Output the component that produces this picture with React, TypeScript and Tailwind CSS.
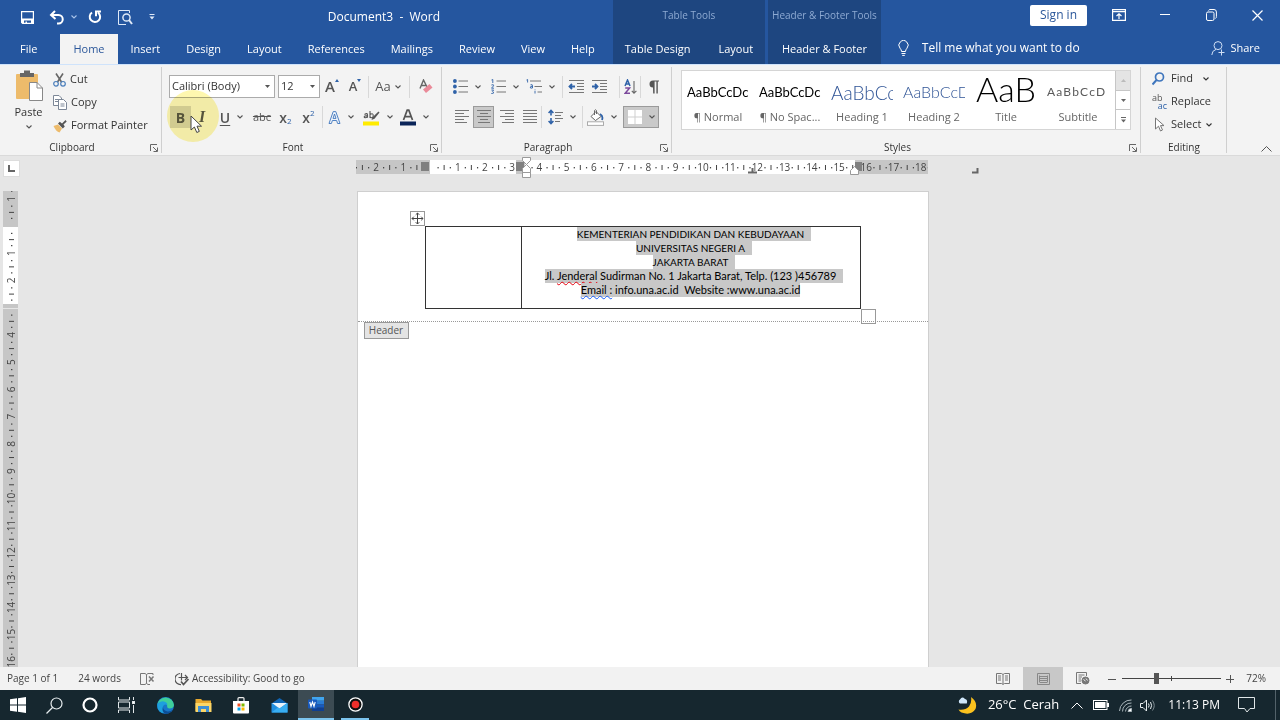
import { useState } from 'react';
import type { ReactNode } from 'react';

const tabs = ['Insert', 'Design', 'Layout', 'References', 'Mailings', 'Review', 'View', 'Help'];

const styleCards = [
    { name: '¶ Normal', sample: 'AaBbCcDc', cls: 'text-[13px] text-black' },
    { name: '¶ No Spac...', sample: 'AaBbCcDc', cls: 'text-[13px] text-black' },
    { name: 'Heading 1', sample: 'AaBbCc', cls: 'text-[19px] font-light text-[#2f5496]' },
    { name: 'Heading 2', sample: 'AaBbCcD', cls: 'text-[16px] font-light text-[#2f5496]' },
    { name: 'Title', sample: 'AaB', cls: 'text-[34px] font-light text-black' },
    { name: 'Subtitle', sample: 'AaBbCcD', cls: 'text-[12px] tracking-widest text-[#5a5a5a]' },
];

function Chevron({ className = '' }: { className?: string }) {
    return (
        <svg width="6" height="4" viewBox="0 0 6 4" fill="none" stroke="currentColor" strokeWidth="1.1" className={`shrink-0 ${className}`}>
            <path d="M0.5 0.5 3 3 5.5 0.5" />
        </svg>
    );
}

function Launcher({ label }: { label: string }) {
    return (
        <button aria-label={label} className="absolute right-1 bottom-[3px]">
            <svg width="8" height="8" viewBox="0 0 8 8" fill="none" stroke="#666" strokeWidth="1">
                <path d="M0.5 7V0.5H7M3 3l4 4M7.5 3.5v4h-4" />
            </svg>
        </button>
    );
}

function Group({ name, launcher = true, className = '', children }: { name: string; launcher?: boolean; className?: string; children: ReactNode }) {
    return (
        <section aria-label={name} className={`relative flex shrink-0 flex-col justify-between pt-[5px] pb-px ${className}`}>
            {children}
            <div className={`text-center text-[10px] leading-[14px] ${launcher ? 'pr-[18px]' : ''}`}>{name}</div>
            {launcher && <Launcher label={`${name} settings`} />}
            <div className="absolute top-[2px] right-0 bottom-[2px] w-px bg-[#cfcfcf]" />
        </section>
    );
}

function Tool({ label, className = '', children, menu = false }: { label: string; className?: string; children: ReactNode; menu?: boolean }) {
    return (
        <button aria-label={label} className={`flex h-[22px] shrink-0 items-center justify-center ${className}`}>
            {children}
            {menu && <Chevron className="ml-[7px] text-[#555]" />}
        </button>
    );
}

function Divider({ className = '' }: { className?: string }) {
    return <div className={`h-[22px] w-px shrink-0 bg-[#d8d8d8] ${className}`} />;
}

// five-line text block used by the alignment buttons
function Lines({ rows }: { rows: [number, number][] }) {
    return (
        <svg width="14" height="16" viewBox="0 0 14 16" stroke="#777" strokeWidth="1">
            {rows.map(([a, b], i) => (
                <path key={i} d={`M${a} ${1.5 + i * 3}H${b}`} />
            ))}
        </svg>
    );
}

function Indent({ flip = false }: { flip?: boolean }) {
    return (
        <svg width="17" height="16" viewBox="0 0 17 16" fill="none" stroke="#777">
            <path d="M1 1.5H16M9 4.5H16M9 7.5H16M9 10.5H16M1 13.5H16" />
            <path d={flip ? 'M1 7.5H6M4 5l2.5 2.5L4 10' : 'M2 7.5H7M4 5 1.5 7.5 4 10'} stroke="#2f62a8" strokeWidth="1.8" />
        </svg>
    );
}

function TitleBar() {
    return (
        <header className="flex h-16 bg-[#25569f] text-white">
            <div className="flex shrink-0 flex-col">
                <div className="flex h-[34px] items-center pl-[21px]">
                    <button aria-label="Save">
                        <svg width="13" height="13" viewBox="0 0 13 13">
                            <path d="M0.6 0.6H12.4V12.4H1.6L0.6 11.4Z" fill="none" stroke="#fff" strokeWidth="1.2" />
                            <path d="M1 7.5H12V12H10V9.5H3V12H1Z" fill="#fff" />
                            <path d="M4.5 10.5h1.5V12H4.5z" fill="#fff" />
                        </svg>
                    </button>
                    <button aria-label="Undo" className="ml-[15px] flex items-center gap-[7px]">
                        <svg width="15" height="15" viewBox="0 0 15 15" fill="none" stroke="#fff" strokeWidth="2">
                            <path d="M6 1 2 5l4.5 4M2 5H9.5a4 4 0 0 1 0 8.5H8" />
                        </svg>
                        <Chevron className="text-[#a9c3ea]" />
                    </button>
                    <button aria-label="Repeat" className="ml-[11px]">
                        <svg width="14" height="14" viewBox="0 0 14 14" fill="none" stroke="#fff" strokeWidth="2">
                            <path d="M4 2.5A5.2 5.2 0 1 0 10 2.6M8 6.2V1.6H13" />
                        </svg>
                    </button>
                    <button aria-label="Print preview" className="ml-4">
                        <svg width="15" height="15" viewBox="0 0 15 15" fill="none" stroke="#dfe9f7">
                            <path d="M11.5 3V0.5H0.5V14.5H8" />
                            <circle cx="8.5" cy="7.5" r="3.6" strokeWidth="1.5" />
                            <path d="m11 10 3 4" strokeWidth="2" />
                        </svg>
                    </button>
                    <button aria-label="Customize toolbar" className="ml-4">
                        <svg width="6" height="6" viewBox="0 0 6 6" fill="#dfe9f7">
                            <path d="M0.5 0H5.5V1H0.5ZM0.5 2.5H5.5L3 5.5Z" />
                        </svg>
                    </button>
                    <h1 className="flex-1 text-center text-[12px] whitespace-pre">Document3  -  Word</h1>
                </div>
                <nav className="flex h-[30px] pr-[5px] pl-[7px] text-[11px]">
                    <button className="mr-[10px] px-[13px]">File</button>
                    <button className="bg-[#f3f3f3] px-[13px] text-[#2b579a]">Home</button>
                    {tabs.map((t) => (
                        <button key={t} className="px-[13px]">{t}</button>
                    ))}
                </nav>
            </div>
            <div className="flex shrink-0 flex-col bg-[#1e4680]">
                <div className="flex h-[30px] items-center justify-center text-[10px] text-[#8eaad2]">Table Tools</div>
                <div className="flex h-[34px] gap-7 px-3 pt-1 text-[11px]">
                    <button>Table Design</button>
                    <button>Layout</button>
                </div>
            </div>
            <div className="ml-[3px] flex shrink-0 flex-col bg-[#1e4680]">
                <div className="flex h-[30px] items-center justify-center px-1 text-[10px] text-[#8eaad2]">Header &amp; Footer Tools</div>
                <button className="h-[34px] pt-1 text-[11px]">Header &amp; Footer</button>
            </div>
            <div className="flex min-w-0 flex-1 flex-col">
                <div className="flex h-[30px] items-center justify-end">
                    <button className="mr-[9px] h-[21px] w-[57px] rounded-xs bg-white text-[12px] text-[#2b579a]">Sign in</button>
                    <button aria-label="Ribbon display options" className="flex w-[46px] justify-center">
                        <svg width="14" height="12" viewBox="0 0 14 12" fill="none" stroke="#fff" strokeWidth="1.2">
                            <path d="M0.6 0.6H13.4V11.4H0.6ZM0.6 2.6H13.4M7 10V5M4.5 7 7 4.7 9.5 7" />
                        </svg>
                    </button>
                    <button aria-label="Minimize" className="flex w-[46px] justify-center">
                        <svg width="10" height="10" viewBox="0 0 10 10" stroke="#fff"><path d="M0 4.5H10" /></svg>
                    </button>
                    <button aria-label="Restore" className="flex w-[46px] justify-center">
                        <svg width="11" height="12" viewBox="0 0 11 12" fill="none" stroke="#fff">
                            <rect x="0.5" y="3" width="7.5" height="8.5" rx="1.5" />
                            <path d="M2.5 1.5Q3 0.5 4 0.5H8Q10.4 0.5 10.4 3V7.5Q10.4 9 9.5 9.5" />
                        </svg>
                    </button>
                    <button aria-label="Close" className="flex w-[46px] justify-center">
                        <svg width="11" height="11" viewBox="0 0 11 11" stroke="#fff" strokeWidth="1.2"><path d="M0.5 0.5l10 10M10.5 0.5l-10 10" /></svg>
                    </button>
                </div>
                <div className="flex h-[34px] items-center pt-[2px] pr-5 pl-[17px] text-[11px]">
                    <svg width="11" height="16" viewBox="0 0 11 16" fill="none" stroke="#fff" className="shrink-0">
                        <path d="M3.5 11.5Q3.5 9.8 2 8.2A4.6 4.6 0 1 1 9 8.2Q7.5 9.8 7.5 11.5ZM3.5 13.5H7.5M4.2 15.4H6.8" />
                    </svg>
                    <input aria-label="Tell me" placeholder="Tell me what you want to do" className="ml-[13px] min-w-0 flex-1 text-[12px] outline-none placeholder:text-white" />
                    <button className="flex items-center gap-[5px]">
                        <svg width="14" height="15" viewBox="0 0 14 15" fill="none" stroke="#cfdff5">
                            <circle cx="7" cy="4.6" r="4" />
                            <path d="M0.8 14Q1 9.5 5 8.4M7.5 11.5H13.5M10.5 8.5V14.5" />
                        </svg>
                        Share
                    </button>
                </div>
            </div>
        </header>
    );
}

function ClipboardGroup() {
    return (
        <Group name="Clipboard" className="w-[162px]">
            <div className="flex text-[11px]">
                <button className="flex w-[53px] shrink-0 flex-col items-center pl-1">
                    <svg width="28" height="32" viewBox="0 0 28 32">
                        <rect x="1" y="4" width="22" height="25" rx="1" fill="#edbb6b" />
                        <path d="M5 3h4V0.5h6V3h4v4H5z" fill="#666" />
                        <path d="M14.5 12.5H22L27.5 18V30.5H14.5Z" fill="#fff" stroke="#888" />
                        <path d="M22 12.5V18h5.5" fill="none" stroke="#888" />
                    </svg>
                    <span className="mt-px leading-[18px]">Paste</span>
                    <Chevron className="mt-1 text-[#555]" />
                </button>
                <div className="-mt-[2px] flex flex-col items-start whitespace-nowrap">
                    <button className="flex h-[23px] items-center gap-1">
                        <svg width="13" height="14" viewBox="0 0 13 14" fill="none">
                            <path d="M3 0.5 8.5 9M10 0.5 4.5 9" stroke="#666" strokeWidth="1.6" />
                            <circle cx="3" cy="10.8" r="2.3" stroke="#4a7ebb" strokeWidth="1.2" />
                            <circle cx="10" cy="10.8" r="2.3" stroke="#4a7ebb" strokeWidth="1.2" />
                        </svg>
                        Cut
                    </button>
                    <button className="flex h-[23px] items-center gap-1">
                        <svg width="14" height="15" viewBox="0 0 14 15" fill="#fff" stroke="#7c8797">
                            <path d="M0.5 0.5H6L8.5 3V10.5H0.5ZM2 4.5H6M2 6.5H6" />
                            <path d="M5.5 4.5H10.5L13.5 7.5V14.5H5.5ZM7.5 9H11.5M7.5 11H11.5" />
                        </svg>
                        Copy
                    </button>
                    <button className="flex h-[23px] items-center gap-1">
                        <svg width="14" height="14" viewBox="0 0 14 14">
                            <path d="M0.5 7 5 5.5 9 9.5 6.5 13.5Q3 12.5 0.5 7Z" fill="#edbb6b" />
                            <path d="m5 4.5 1.8-1.8L9 4.5 12.5 1l1.2 1.5L10.5 5.6 11.8 7.5 9.8 9.4Z" fill="#555" />
                        </svg>
                        Format Painter
                    </button>
                </div>
            </div>
        </Group>
    );
}

function FontGroup() {
    return (
        <Group name="Font" className="w-[280px]">
            <div className="flex flex-col gap-2 pt-[5px] pl-[7px]">
                <div className="flex items-center">
                    <div className="relative">
                        <select aria-label="Font name" className="h-[23px] w-[106px] appearance-none border border-[#ababab] bg-white pl-[2px] text-[11px]">
                            <option>Calibri (Body)</option>
                        </select>
                        <svg width="5" height="3" viewBox="0 0 5 3" fill="#555" className="pointer-events-none absolute top-[10px] right-[5px]"><path d="M0 0H5L2.5 3Z" /></svg>
                    </div>
                    <div className="relative ml-[3px]">
                        <select aria-label="Font size" className="h-[23px] w-[42px] appearance-none border border-[#ababab] bg-white pl-[2px] text-[11px]">
                            <option>12</option>
                        </select>
                        <svg width="5" height="3" viewBox="0 0 5 3" fill="#555" className="pointer-events-none absolute top-[10px] right-[5px]"><path d="M0 0H5L2.5 3Z" /></svg>
                    </div>
                    <Tool label="Increase font size" className="w-6">
                        <span className="text-[15px] font-semibold text-[#555]">A</span>
                        <svg width="4" height="3" viewBox="0 0 4 3" fill="#2f62a8" className="mb-3"><path d="M0 3H4L2 0Z" /></svg>
                    </Tool>
                    <Tool label="Decrease font size" className="w-[22px]">
                        <span className="text-[13px] font-semibold text-[#555]">A</span>
                        <svg width="4" height="3" viewBox="0 0 4 3" fill="#2f62a8" className="mb-3"><path d="M0 0H4L2 3Z" /></svg>
                    </Tool>
                    <Divider className="mx-[2px]" />
                    <button aria-label="Change case" className="flex h-[22px] w-[34px] shrink-0 items-center justify-center gap-1 text-[13px] text-[#555]">
                        Aa
                        <Chevron />
                    </button>
                    <Divider className="mx-1" />
                    <Tool label="Clear formatting" className="w-6">
                        <svg width="14" height="15" viewBox="0 0 14 15" fill="none">
                            <path d="M1 9.5 4.5 1 8 8M2.2 6.5H7" stroke="#666" strokeWidth="1.4" />
                            <path d="m4 10.5 6.5-5.5 3 3.5L7 14Z" fill="#ea8a99" />
                        </svg>
                    </Tool>
                </div>
                <div className="flex items-center pl-px text-[#555]">
                    <Tool label="Bold" className="w-[21px] bg-[#d2d2d2]"><span className="text-[14px] font-bold">B</span></Tool>
                    <Tool label="Italic" className="w-[22px]"><span className="font-['Liberation_Serif'] text-[16px] font-bold italic">I</span></Tool>
                    <Tool label="Underline" className="w-[37px]" menu><span className="text-[14px] font-semibold underline underline-offset-2">U</span></Tool>
                    <Tool label="Strikethrough" className="w-6"><span className="text-[11px] line-through">abc</span></Tool>
                    <Tool label="Subscript" className="w-[23px]">
                        <span className="text-[14px] font-semibold">x</span><span className="mt-2 text-[8px] text-[#2f62a8]">2</span>
                    </Tool>
                    <Tool label="Superscript" className="w-[23px]">
                        <span className="text-[14px] font-semibold">x</span><span className="mb-2 text-[8px] text-[#2f62a8]">2</span>
                    </Tool>
                    <Divider className="mx-[2px]" />
                    <Tool label="Text effects" className="w-[32px]" menu>
                        <svg width="13" height="13" viewBox="0 0 13 13" fill="none">
                            <path d="M1 12.5 5.2 0.6H7.8L12 12.5H9.6L8.6 9.5H4.4L3.4 12.5ZM5 7.4H8L6.5 3Z" fill="#eef4fb" stroke="#3f76bd" strokeWidth="0.9" />
                        </svg>
                    </Tool>
                    <Tool label="Highlight colour" className="ml-[2px] w-[37px]" menu>
                        <svg width="17" height="17" viewBox="0 0 17 17">
                            <path d="M1.5 5.5Q4.5 3.5 4.5 6V8.8M4.5 6.6Q1 6.6 1.2 8Q1.6 9.4 4.5 8M7 2V9M7 5.5Q10.5 3.5 10.2 7Q9.5 10 7 8" fill="none" stroke="#555" strokeWidth="1.1" />
                            <path d="M15.5 2.5 16.5 3.5 11.5 9.8 8.5 11 9.5 8.3Z" fill="#555" />
                            <rect y="12.5" width="16" height="4" fill="#ffeb00" />
                        </svg>
                    </Tool>
                    <Tool label="Font colour" className="w-[37px]" menu>
                        <svg width="16" height="17" viewBox="0 0 16 17">
                            <path d="M3.5 11 7.2 1.2H8.8L12.5 11M5 7.6H11" fill="none" stroke="#555" strokeWidth="1.7" />
                            <rect y="12.5" width="16" height="4" fill="#0a2458" />
                        </svg>
                    </Tool>
                </div>
            </div>
            {/* click highlight and pointer over the Bold button */}
            <div className="pointer-events-none absolute top-[25px] left-[5px] size-[52px] rounded-full bg-[#fdf27a]/60 mix-blend-multiply" />
            <svg width="13" height="19" viewBox="0 0 13 19" className="pointer-events-none absolute top-[50px] left-[28px]">
                <path d="M1 1V15L4.4 12 6.8 17.5 9.3 16.4 7 11.2H11.5Z" fill="#fff" stroke="#444" />
            </svg>
        </Group>
    );
}

function ParagraphGroup() {
    return (
        <Group name="Paragraph" className="w-[230px]">
            <div className="flex flex-col gap-2 pt-[5px] pl-[9px]">
                <div className="flex h-[23px] items-center">
                    <Tool label="Bullets" className="w-[31px]" menu>
                        <svg width="15" height="15" viewBox="0 0 15 15" fill="#2f62a8">
                            <circle cx="1.9" cy="2" r="1.9" /><circle cx="1.9" cy="7.5" r="1.9" /><circle cx="1.9" cy="13" r="1.9" />
                            <path d="M5.5 2H15M5.5 7.5H15M5.5 13H15" stroke="#777" />
                        </svg>
                    </Tool>
                    <Tool label="Numbering" className="ml-[7px] w-[31px]" menu>
                        <svg width="15" height="15" viewBox="0 0 15 15" fill="none" stroke="#2f62a8">
                            <path d="M0.5 1 1.8 0.5V4M0.4 6Q3 5 2.6 6.8L0.5 9.2H3M0.4 11H2.6L1.5 12.4Q3.2 13 2.4 14.2L0.3 14.5" strokeWidth="0.9" />
                            <path d="M5.5 2H15M5.5 7.5H15M5.5 13H15" stroke="#777" />
                        </svg>
                    </Tool>
                    <Tool label="Multilevel list" className="ml-[5px] w-[31px]" menu>
                        <svg width="16" height="15" viewBox="0 0 16 15" fill="none" stroke="#2f62a8">
                            <path d="M0.5 1 1.6 0.5V3.5M4.5 5.8Q6.8 5 6.5 7V9Q4 9.8 4.2 8Q4.4 7.2 6.5 7.4M9 10.5V11.3M9 12V14.5" strokeWidth="0.9" />
                            <path d="M4 2H15M8.500 7.500H16M11.500 13H16" stroke="#777" />
                        </svg>
                    </Tool>
                    <Divider className="mr-[2px] ml-[6px]" />
                    <Tool label="Decrease indent" className="w-[23px]"><Indent /></Tool>
                    <Tool label="Increase indent" className="w-[23px]"><Indent flip /></Tool>
                    <Divider className="ml-2" />
                    <Tool label="Sort" className="w-5">
                        <svg width="13" height="16" viewBox="0 0 13 16" fill="none" strokeWidth="1.5">
                            <path d="M1 7 3.5 1 6 7M1.8 5H5.2" stroke="#2f62a8" />
                            <path d="M1.2 9H5.6L1.2 14.3H6" stroke="#7c4a9c" />
                            <path d="M10 2V14M7.8 11.8 10 14.2 12.4 11.8" stroke="#666" strokeWidth="1.1" />
                        </svg>
                    </Tool>
                    <Divider />
                    <Tool label="Show formatting marks" className="w-6">
                        <svg width="11" height="14" viewBox="0 0 11 14" fill="#555">
                            <path d="M5 7.5A3.4 3.4 0 0 1 5 0.5H11V1.6H9.8V13.5H8.4V1.6H6.6V13.5H5.2Z" />
                        </svg>
                    </Tool>
                </div>
                <div className="flex items-center">
                    <Tool label="Align left" className="w-[21px]"><Lines rows={[[0, 14], [0, 9], [0, 14], [0, 9], [0, 12]]} /></Tool>
                    <Tool label="Center" className="ml-px w-[21px] border border-[#9a9a9a] bg-[#c9c9c9]"><Lines rows={[[0, 14], [3, 11], [0, 14], [3, 11], [1, 13]]} /></Tool>
                    <Tool label="Align right" className="ml-[2px] w-[21px]"><Lines rows={[[0, 14], [5, 14], [0, 14], [5, 14], [2, 14]]} /></Tool>
                    <Tool label="Justify" className="ml-[2px] w-[21px]"><Lines rows={[[0, 14], [0, 14], [0, 14], [0, 14], [0, 14]]} /></Tool>
                    <Divider className="mr-[5px] ml-px" />
                    <Tool label="Line spacing" className="w-[29px]" menu>
                        <svg width="15" height="16" viewBox="0 0 15 16" fill="none" stroke="#777">
                            <path d="M7 3.5H15M7 6.5H13M7 9.5H15M7 12.5H12" />
                            <path d="M3 1.5V6.5M0.6 4 3 1.5 5.4 4M3 9V14.5M0.6 12 3 14.5 5.4 12" stroke="#2f62a8" strokeWidth="1.6" />
                        </svg>
                    </Tool>
                    <Divider className="ml-[6px]" />
                    <Tool label="Shading" className="w-[38px]" menu>
                        <svg width="17" height="17" viewBox="0 0 17 17" fill="none" stroke="#666">
                            <path d="M4 7.5 9 2.5 14 7.5 8.5 11.5ZM7.5 6V1.5Q8.5 0 9.5 1.5V5" fill="#fff" />
                            <path d="M13 5Q16.5 7 15 11" stroke="#2f62a8" strokeWidth="1.8" />
                            <rect x="0.5" y="12.8" width="16" height="3.6" fill="#fff" stroke="#aaa" />
                        </svg>
                    </Tool>
                    <Tool label="Borders" className="ml-[2px] w-9 border border-[#9a9a9a] bg-[#c9c9c9]" menu>
                        <svg width="14" height="14" viewBox="0 0 14 14" fill="#fff">
                            <rect width="14" height="14" />
                            <path d="M7 0V14M0 7H14" stroke="#cfcfcf" />
                        </svg>
                    </Tool>
                </div>
            </div>
        </Group>
    );
}

function StylesGroup() {
    return (
        <Group name="Styles" className="w-[469px]">
            <div className="mr-[10px] ml-[9px] flex h-[60px] border border-[#d5d5d5] bg-white">
                {styleCards.map((s) => (
                    <button key={s.name} className="flex w-[72px] shrink-0 flex-col items-center justify-between">
                        <span className={`flex h-9 w-[62px] items-center overflow-hidden font-[Lato] leading-none whitespace-nowrap ${s.sample === 'AaB' ? 'justify-center' : 'pt-[6px]'} ${s.cls}`}>
                            {s.sample}
                        </span>
                        <span className="mb-1 w-full truncate text-[11px] leading-4 text-[#666]">{s.name}</span>
                    </button>
                ))}
                <div className="ml-auto flex w-[15px] flex-col border-l border-[#c6c6c6]">
                    <button aria-label="Previous styles" className="flex flex-1 items-center justify-center bg-[#e4e4e4]">
                        <svg width="5" height="3" viewBox="0 0 5 3" fill="#bbb"><path d="M0 3H5L2.5 0Z" /></svg>
                    </button>
                    <button aria-label="Next styles" className="flex flex-1 items-center justify-center border-y border-[#c6c6c6]">
                        <svg width="5" height="3" viewBox="0 0 5 3" fill="#666"><path d="M0 0H5L2.5 3Z" /></svg>
                    </button>
                    <button aria-label="More styles" className="flex flex-1 items-center justify-center">
                        <svg width="5" height="6" viewBox="0 0 5 6" fill="#666"><path d="M0 0H5V1H0ZM0 2.5H5L2.5 5.5Z" /></svg>
                    </button>
                </div>
            </div>
        </Group>
    );
}

function EditingGroup() {
    return (
        <Group name="Editing" launcher={false} className="w-[86px]">
            <div className="-mt-[3px] flex flex-col items-start pl-[11px] text-[11px]">
                <button className="flex h-[23px] items-center gap-[5px]">
                    <svg width="14" height="14" viewBox="1 0 14 14" fill="none" stroke="#3f76bd" strokeWidth="1.7">
                        <circle cx="8.5" cy="5" r="4" /><path d="M5.5 8 1.5 12.5" strokeWidth="2" />
                    </svg>
                    Find
                    <Chevron className="ml-[5px]" />
                </button>
                <button className="flex h-[23px] items-center gap-1">
                    <span aria-hidden="true" className="flex w-[15px] flex-col text-left text-[9px] leading-[8px] text-[#555]">
                        <span className="h-2">ab</span>
                        <span className="h-2 text-right text-[#2f62a8]">ac</span>
                    </span>
                    Replace
                </button>
                <button className="flex h-[23px] items-center gap-[5px]">
                    <svg width="14" height="15" viewBox="-2 0 14 15" fill="#fff" stroke="#777">
                        <path d="M1.5 1V12L4.5 9.2 6.5 14 8.5 13 6.500 8.600H10Z" />
                    </svg>
                    Select
                    <Chevron />
                </button>
            </div>
        </Group>
    );
}

const CM = 27.24;
const range = (from: number, to: number) => Array.from({ length: to - from + 1 }, (_, i) => from + i);

// number at every centimetre, a line at the half and dots at the quarters
function Scale({ from, to, zero, step, y, skip }: { from: number; to: number; zero: number; step: number; y: number; skip: number[] }) {
    return (
        <g fill="#444" fontSize="10" textAnchor="middle">
            {range(from, to).map((n) => {
                const x = zero + n * step;
                return (
                    <g key={n}>
                        {!skip.includes(n) && <text x={x} y={y}>{Math.abs(n)}</text>}
                        <rect x={x - 8} y={y - 4} width="1.2" height="1.4" />
                        <rect x={x + 7} y={y - 4} width="1.2" height="1.4" />
                        <rect x={x + CM / 2 - 0.5} y={y - 6} width="1" height="5" />
                    </g>
                );
            })}
        </g>
    );
}

function HorizontalRuler() {
    return (
        <svg width="625" height="24" viewBox="0 0 625 24" aria-label="Horizontal ruler" className="overflow-visible">
            <path d="M0 0H572V14H0Z" fill="#c6c6c6" />
            <path d="M74 0H160V14H74ZM169 0H499V14H169Z" fill="#fff" />
            <svg width="572" height="14">
                <Scale from={-3} to={18} zero={74.5} step={CM} y={11} skip={[-3, 0]} />
            </svg>
            <path d="M65 2h8v9h-8zM160 2h8v9h-8zM499 2h7v9h-7z" fill="#808080" />
            <path d="M166.500 -2.500h8v3l-4 4-4-4zM166.500 12.500v-4l4-4 4 4v4zM166.500 12.500h8v5h-8z" fill="#fff" stroke="#999" />
            <path d="M494.500 14.500v-4l4-4 4 4v4z" fill="#fff" stroke="#999" />
            <path d="M392 12.500h9M396.500 8v5M616 12.500h5.500V8" fill="none" stroke="#666" strokeWidth="2" />
        </svg>
    );
}

function VerticalRuler() {
    return (
        <svg width="15" height="476" viewBox="0 0 15 476" aria-label="Vertical ruler" className="ml-[3px]">
            <path d="M0 0H15V476H0Z" fill="#c6c6c6" />
            <path d="M0 36H15V113H0Z" fill="#fff" />
            <path d="M0 117.500H15" stroke="#e6e6e6" />
            <g transform="translate(0 476) rotate(-90)">
                <Scale from={-1} to={16} zero={441} step={-CM} y={12} skip={[0, 3]} />
            </g>
        </svg>
    );
}

function Selected({ children, end = false }: { children: ReactNode; end?: boolean }) {
    return <span className={`inline-block h-[14px] bg-[#c8c8c8] align-top ${end ? '' : '-mr-[7px] pr-[7px]'}`}>{children}</span>;
}

function Page() {
    return (
        <main className="relative h-[476px] w-[572px] shrink-0 border border-b-0 border-[#cfcfcf] bg-white">
            <button aria-label="Move table" className="absolute top-[19px] left-[52px] border border-[#999] bg-white">
                <svg width="13" height="13" viewBox="0 0 13 13" fill="none" stroke="#444">
                    <path d="M6.500 1V12M1 6.500H12M4.700 2.800 6.500 1 8.300 2.800M4.700 10.200 6.500 12 8.300 10.200M2.800 4.700 1 6.500 2.800 8.300M10.200 4.700 12 6.500 10.200 8.300" />
                </svg>
            </button>
            <div className="h-[130px] border-b border-dotted border-[#999] pt-[34px] pl-[67px]">
                <table className="h-[83px] w-[436px] border-collapse font-[Lato] text-[11px] leading-[14px] text-black">
                    <tbody>
                        <tr>
                            <td className="w-24 border border-[#333]" />
                            <td className="border border-[#333] p-0 text-center align-top">
                                <div className="text-[10px]">
                                    <p><Selected>KEMENTERIAN PENDIDIKAN DAN KEBUDAYAAN</Selected></p>
                                    <p><Selected>UNIVERSITAS NEGERI A</Selected></p>
                                    <p><Selected>JAKARTA BARAT</Selected></p>
                                </div>
                                <p>
                                    <Selected>
                                        Jl. <span className="underline decoration-red-600 decoration-wavy decoration-1 underline-offset-1">Jenderal</span> Sudirman No. 1 Jakarta Barat, Telp. (123 )456789
                                    </Selected>
                                </p>
                                <p>
                                    <Selected end>
                                        <span className="underline decoration-blue-600 decoration-wavy decoration-1 underline-offset-1">Email :</span> info.una.ac.id&nbsp; Website :www.una.ac.id
                                    </Selected>
                                </p>
                            </td>
                        </tr>
                    </tbody>
                </table>
            </div>
            <div className="absolute top-[117px] left-[503px] size-[15px] border border-[#999]" />
            <div className="relative ml-[6px] w-[45px] border border-[#999] bg-[#e4e4e4] text-center text-[10px] leading-[15px] text-[#555]">Header</div>
        </main>
    );
}

function StatusBar() {
    const [zoom, setZoom] = useState(34);

    return (
        <footer className="flex h-[23px] items-center bg-[#f2f2f2] text-[10px] text-[#444]">
            <span className="ml-[7px]">Page 1 of 1</span>
            <span className="ml-5">24 words</span>
            <svg width="15" height="12" viewBox="0 0 15 12" fill="none" stroke="#777" className="ml-[19px]">
                <path d="M10 11.500H8L6.500 10.500 5 11.500H0.500V0.500H5L6.500 1.500V10.500M6.500 1.500 8 0.500H13V2" />
                <path d="m9 3.500 4.500 5M13.500 3.500 9 8.500" strokeWidth="1.500" />
            </svg>
            <button className="ml-5 flex items-center gap-[2px]">
                <svg width="15" height="14" viewBox="0 0 15 14" fill="none" stroke="#555" strokeWidth="1.2">
                    <path d="M5 1.500A5.500 5.500 0 0 0 6 12.500M6.500 1V8.500M3.500 5.500H12.500M10 3 12.500 5.500 10 8" />
                    <path d="m6 9.500 2.500 3 5-5.500" strokeWidth="1.700" />
                </svg>
                Accessibility: Good to go
            </button>
            <div className="ml-auto flex h-full items-center">
                <button aria-label="Read mode" className="flex w-10 justify-center">
                    <svg width="14" height="12" viewBox="0 0 14 12" fill="none" stroke="#777">
                        <path d="M7 1.500 5.500 0.500H0.500V10.500H5.500L7 11.500 8.500 10.500H13.500V0.500H8.500ZM7 1.500V11M2 3H5M2 5H5M2 7H5M9 3H12M9 5H12M9 7H12" />
                    </svg>
                </button>
                <button aria-label="Print layout" className="flex h-full w-10 items-center justify-center bg-[#c8c8c8]">
                    <svg width="13" height="12" viewBox="0 0 13 12" fill="none" stroke="#888">
                        <path d="M0.500 0.500H12.500V11.500H0.500ZM3 3.500H10M3 5.500H10M3 7.500H10M3 9.500H10M2.500 2.500V9.500M10.500 2.500V9.500" />
                    </svg>
                </button>
                <button aria-label="Web layout" className="flex w-10 justify-center">
                    <svg width="14" height="13" viewBox="0 0 14 13" fill="none" stroke="#777">
                        <path d="M5 11.500H0.500V0.500H10.500V4M2.500 3H8.500M2.500 5H6M2.500 7H5M2.500 9H5" />
                        <circle cx="9.500" cy="8.500" r="3.500" fill="#777" />
                        <path d="M7.500 7.500 9.500 9M10 6.500 11.500 8.500" stroke="#f2f2f2" />
                    </svg>
                </button>
                <button aria-label="Zoom out" className="ml-1 flex w-[10px] justify-center">
                    <svg width="8" height="8" viewBox="0 0 8 8" stroke="#555"><path d="M0 4.500H8" /></svg>
                </button>
                <div className="relative ml-[5px] flex items-center">
                    <div className="absolute left-[49px] h-[5px] w-px bg-[#444]" />
                    <input
                        type="range"
                        aria-label="Zoom"
                        value={zoom}
                        onChange={(e) => setZoom(Number(e.target.value))}
                        className="relative h-3 w-[99px] appearance-none bg-[linear-gradient(#444,#444)] bg-[length:100%_1px] bg-center bg-no-repeat [&::-webkit-slider-thumb]:h-[11px] [&::-webkit-slider-thumb]:w-[5px] [&::-webkit-slider-thumb]:appearance-none [&::-webkit-slider-thumb]:bg-[#555]"
                    />
                </div>
                <button aria-label="Zoom in" className="ml-1 flex w-[10px] justify-center">
                    <svg width="8" height="8" viewBox="0 0 8 8" stroke="#555"><path d="M0 4.500H8M4.500 0V8" /></svg>
                </button>
                <button className="mr-[14px] ml-[11px]">72%</button>
            </div>
        </footer>
    );
}

function TaskItem({ label, className = 'w-[38px]', children }: { label: string; className?: string; children: ReactNode }) {
    return (
        <button aria-label={label} className={`flex h-full shrink-0 items-center justify-center ${className}`}>
            {children}
        </button>
    );
}

function Taskbar() {
    return (
        <div className="flex h-[30px] items-center bg-[#16272f] text-white">
            <TaskItem label="Start" className="w-9">
                <svg width="16" height="16" viewBox="0 0 16 16" fill="#fff"><path d="M0 2.300 7 1.300V7.500H0ZM8 1.200 16 0V7.500H8ZM0 8.500H7V14.700L0 13.700ZM8 8.500H16V16L8 14.800Z" /></svg>
            </TaskItem>
            <TaskItem label="Search" className="w-9">
                <svg width="17" height="17" viewBox="0 0 17 17" fill="none" stroke="#e8eef0" strokeWidth="1.2"><circle cx="10.500" cy="6.500" r="5.500" /><path d="M6.500 10.500 0.500 16.500" /></svg>
            </TaskItem>
            <TaskItem label="Cortana" className="w-9">
                <svg width="16" height="16" viewBox="0 0 16 16" fill="none" stroke="#fff" strokeWidth="2.200"><circle cx="8" cy="8" r="6.500" /></svg>
            </TaskItem>
            <TaskItem label="Task view" className="mr-[2px] w-9">
                <svg width="17" height="16" viewBox="0 0 17 16" fill="none" stroke="#e0e6e8"><path d="M0.500 0V3H11.500V0M0.500 5H11.500V11H0.500ZM0.500 16V13H11.500V16M15.500 0V3M15.500 8V16" /><rect x="14.500" y="4.500" width="2" height="2" fill="#fff" /></svg>
            </TaskItem>
            <TaskItem label="Edge">
                <svg width="17" height="17" viewBox="0 0 17 17">
                    <circle cx="8.500" cy="8.500" r="8.500" fill="#1877c9" />
                    <path d="M0.300 7A8.500 8.500 0 0 1 17 8Q16.500 11.500 12.500 11.500 10 11.500 10.200 9.800 10.500 6.500 7 5.500 3 4.800 0.300 7Z" fill="#3fcf9a" />
                    <path d="M0.300 7Q3 3.800 7 4.500 10.500 5.300 10.300 8Q7 6.500 6 9.500 5.500 13 9.500 15.500 3 17.500 0.600 11Z" fill="#1ea0dd" />
                    <path d="M6 9.500Q5.800 13.500 10.500 14.500 13.500 14.800 15.800 12.800 13 17 9 16.900 4 15.500 6 9.500Z" fill="#0c4e96" />
                </svg>
            </TaskItem>
            <TaskItem label="File Explorer">
                <svg width="17" height="15" viewBox="0 0 17 15">
                    <path d="M0.500 1H6L7.500 2.500H16V13H0.500Z" fill="#e8a92e" />
                    <path d="M0.500 5H16.500V14H0.500Z" fill="#fcd667" />
                    <path d="M3 8H14V14H11V11H6V14H3Z" fill="#3e8fd4" />
                </svg>
            </TaskItem>
            <TaskItem label="Store">
                <svg width="16" height="17" viewBox="0 0 16 17">
                    <path d="M5 4V1.500Q5 0.600 6 0.600H10Q11 0.600 11 1.500V4" fill="none" stroke="#eee" strokeWidth="1.200" />
                    <path d="M0 4H16V15.500Q16 16.500 15 16.500H1Q0 16.500 0 15.500Z" fill="#fff" />
                    <path d="M4.500 6.500h3v3h-3z" fill="#f25022" /><path d="M8.500 6.500h3v3h-3z" fill="#7fba00" />
                    <path d="M4.500 10.500h3v3h-3z" fill="#00a4ef" /><path d="M8.500 10.500h3v3h-3z" fill="#ffb900" />
                </svg>
            </TaskItem>
            <TaskItem label="Mail">
                <svg width="17" height="15" viewBox="0 0 17 15">
                    <path d="M0.500 5.500 8.500 0 16.500 5.500Z" fill="#0f65b5" />
                    <path d="M0.500 5H16.500V14.500H0.500Z" fill="#1f8ee0" />
                    <path d="M1 5H16L8.500 10.500Z" fill="#e8f3fb" />
                    <path d="M0.500 14.500 7 9.500 8.500 10.500 16.500 5V14.500Z" fill="#38aef2" />
                </svg>
            </TaskItem>
            <TaskItem label="Word" className="w-9 border-b-2 border-[#7cc4ee] bg-[#3c4b53]">
                <svg width="16" height="16" viewBox="0 0 16 16">
                    <path d="M4 1H16V4.700H4Z" fill="#41a5ee" /><path d="M4 4.700H16V8.300H4Z" fill="#2b7cd3" />
                    <path d="M4 8.300H16V11.700H4Z" fill="#185abd" /><path d="M4 11.700H16V15H4Z" fill="#103f91" />
                    <rect y="3.500" width="9" height="9" rx="0.800" fill="#185abd" />
                    <path d="m1.800 6 1.200 4.300L4.500 6 6 10.300 7.200 6" fill="none" stroke="#fff" strokeWidth="1.100" />
                </svg>
            </TaskItem>
            <TaskItem label="Screen recorder" className="ml-[7px] w-7 border-b-2 border-[#7cc4ee]">
                <svg width="15" height="15" viewBox="0 0 15 15"><circle cx="7.500" cy="7.500" r="6.600" fill="#111" stroke="#fff" strokeWidth="1.300" /><circle cx="7.500" cy="7.500" r="3.800" fill="#ef2f2a" /></svg>
            </TaskItem>
            <div className="ml-auto flex h-full items-center">
                <button className="flex items-center gap-[10px] text-[13px]">
                    <svg width="21" height="19" viewBox="0 0 21 19">
                        <path d="M14 1Q21 6 18.500 13 14 20 4.500 16.500 2.500 15.500 1.500 13.500 8 14.500 12 10.500 15 6.500 14 1Z" fill="#fcc21e" />
                        <path d="M3 7.500A2.300 2.300 0 0 1 3 3.500Q5 0 8 3 11 3.500 9.800 7.500Z" fill="#cfe6fa" />
                    </svg>
                    <span className="whitespace-pre">26°C  Cerah</span>
                </button>
                <button aria-label="Hidden icons" className="ml-3">
                    <svg width="12" height="7" viewBox="0 0 12 7" fill="none" stroke="#fff"><path d="M0.500 6.500 6 1 11.500 6.500" /></svg>
                </button>
                <svg width="16" height="10" viewBox="0 0 16 10" className="ml-[10px]"><rect x="0.500" y="0.500" width="13.500" height="9" fill="none" stroke="#fff" /><path d="M2 2H12.500V8H2ZM14 3H16V7H14Z" fill="#fff" /></svg>
                <svg width="13" height="13" viewBox="0 0 13 13" fill="none" stroke="#aab6bb" className="ml-[10px]">
                    <path d="M0.500 12A11.500 11.500 0 0 1 12.500 1M3.500 12.500A8.500 8.500 0 0 1 12.500 4M6.500 12.500A6 6 0 0 1 12.500 7" />
                    <path d="M9 12.500A3.500 3.500 0 0 1 12.500 9.500V12.500Z" fill="#fff" />
                </svg>
                <svg width="16" height="13" viewBox="0 0 16 13" fill="none" stroke="#e8eef0" className="ml-2">
                    <path d="M0.500 4.500H3L6.500 1V12L3 8.500H0.500ZM8.500 4.500Q9.700 6.500 8.500 8.500M10.500 3Q12.700 6.500 10.500 10" />
                    <path d="M12.500 1.500Q16 6.500 12.500 11.500" stroke="#7d8a90" />
                </svg>
                <time className="ml-3 text-[12px]">11:13 PM</time>
                <button aria-label="Notifications" className="ml-[18px]">
                    <svg width="17" height="16" viewBox="0 0 17 16" fill="none" stroke="#e0e6e8"><path d="M0.500 0.500H16.500V11.500H12L9 15 6.500 11.500H0.500Z" /></svg>
                </button>
                <div className="mr-1 ml-5 h-full w-px bg-[#53626a]" />
            </div>
        </div>
    );
}

export default function App() {
    return (
        <div className="flex min-h-screen flex-col overflow-hidden bg-[#e6e6e6] font-['Open_Sans',sans-serif] text-[11px] text-[#333]">
            <TitleBar />
            <div className="flex h-[92px] border-t border-b border-t-[#cfe3fb] border-b-[#dadada] bg-[#f3f3f3]">
                <ClipboardGroup />
                <FontGroup />
                <ParagraphGroup />
                <StylesGroup />
                <EditingGroup />
                <button aria-label="Collapse ribbon" className="mt-auto mr-2 mb-[3px] ml-auto">
                    <svg width="11" height="6" viewBox="0 0 11 6" fill="none" stroke="#555"><path d="M0.500 5.500 5.500 0.500 10.500 5.500" /></svg>
                </button>
            </div>
            <div className="flex flex-1 flex-col">
                <div className="flex h-[35px] pt-1">
                    <button aria-label="Tab selector" className="mr-[336px] ml-[3px] flex size-[17px] items-center justify-center border border-[#ddd] bg-white">
                        <svg width="7" height="7" viewBox="0 0 7 7" fill="none" stroke="#666" strokeWidth="2"><path d="M1 0V6H7" /></svg>
                    </button>
                    <HorizontalRuler />
                </div>
                <div className="flex flex-1">
                    <VerticalRuler />
                    <div className="flex flex-1 justify-center pr-[13px]">
                        <Page />
                    </div>
                </div>
            </div>
            <StatusBar />
            <Taskbar />
        </div>
    );
}
